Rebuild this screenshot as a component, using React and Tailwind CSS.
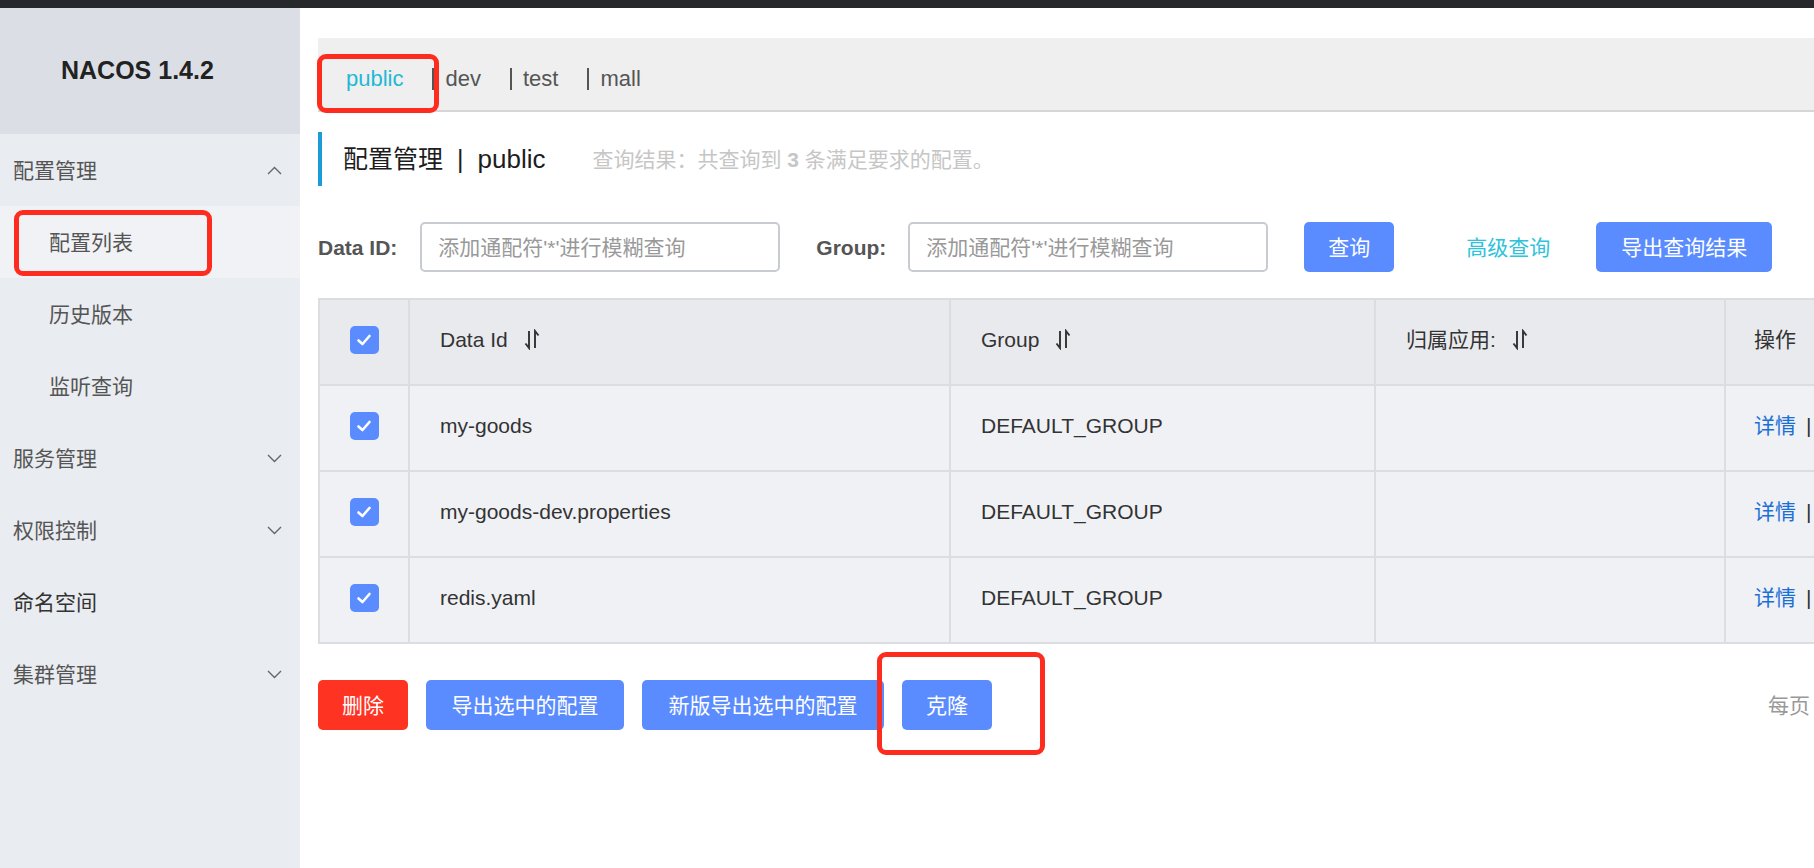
import React from "react";

const FONT = { fontFamily: '"Liberation Sans", "Noto Sans CJK SC", sans-serif' };

function ChevronUp() {
  return (
    <svg width="15" height="9" viewBox="0 0 15 9" fill="none">
      <polyline points="1,8 7.5,1.5 14,8" stroke="#666" strokeWidth="1.4" />
    </svg>
  );
}
function ChevronDown() {
  return (
    <svg width="15" height="9" viewBox="0 0 15 9" fill="none">
      <polyline points="1,1 7.5,7.5 14,1" stroke="#666" strokeWidth="1.4" />
    </svg>
  );
}
function SortIcon() {
  return (
    <svg width="16" height="21" viewBox="0 0 16 21" fill="none" className="ml-[16px]">
      <path d="M5 2 V19 L1.5 14.5" stroke="#333" strokeWidth="1.9" />
      <path d="M11 19 V2 L14.5 6.5" stroke="#333" strokeWidth="1.9" />
    </svg>
  );
}
function Check() {
  return (
    <div className="w-[29px] h-[28px] rounded-[5px] bg-[#5b8cff] flex items-center justify-center">
      <svg width="16" height="14" viewBox="0 0 16 14" fill="none">
        <polyline points="2.5,7.5 6.5,11 13.5,3" stroke="#fff" strokeWidth="2.6" strokeLinecap="round" strokeLinejoin="round" />
      </svg>
    </div>
  );
}

const menu = [
  { label: "配置管理", kind: "group", open: true },
  { label: "配置列表", kind: "sub", active: true },
  { label: "历史版本", kind: "sub" },
  { label: "监听查询", kind: "sub" },
  { label: "服务管理", kind: "group" },
  { label: "权限控制", kind: "group" },
  { label: "命名空间", kind: "plain" },
  { label: "集群管理", kind: "group" },
];

const rows = ["my-goods", "my-goods-dev.properties", "redis.yaml"];
const GRID = "grid grid-cols-[90px_541px_425px_350px_200px]";
const CELL = "border-r-2 border-b-2 border-[#dcdde1] flex items-center pb-[5px]";

export default function App() {
  return (
    <div className="relative w-[1814px] h-[868px] overflow-hidden bg-white flex flex-col" style={FONT}>
      <div className="h-[8px] bg-[#26282c] shrink-0" />
      <div className="flex flex-1 min-h-0">
        {/* Sidebar */}
        <aside className="w-[300px] shrink-0 bg-[#e9ecf0] flex flex-col">
          <div className="h-[126px] bg-[#dbdfe5] flex items-center pl-[61px] pb-[2px]">
            <span className="text-[25px] font-bold text-[#222] leading-none">NACOS 1.4.2</span>
          </div>
          {menu.map((m) => (
            <div
              key={m.label}
              className={
                "h-[72px] flex items-center justify-between pr-[18px] text-[21px] leading-none " +
                (m.kind === "sub" ? "pl-[49px] " : "pl-[13px] ") +
                (m.active ? "bg-[#f1f2f6] " : "") +
                (m.kind === "plain" ? "text-[#333]" : "text-[#555]")
              }
            >
              <span>{m.label}</span>
              {m.kind === "group" && (m.open ? <ChevronUp /> : <ChevronDown />)}
            </div>
          ))}
        </aside>

        {/* Main */}
        <main className="flex-1 min-w-0 overflow-hidden pl-[18px] pt-[30px] whitespace-nowrap">
          {/* tabs */}
          <div className="h-[74px] bg-[#efefef] border-b-2 border-[#d6d6d6] flex items-center pt-[9px] text-[22px] leading-none">
            <span className="ml-[28px] text-[#1fb9d6]">public</span>
            {["dev", "test", "mall"].map((t) => (
              <div key={t} className="flex items-center ml-[29px]">
                <div className="w-[2px] h-[22px] bg-[#555]" />
                <span className="ml-[11px] text-[#555]">{t}</span>
              </div>
            ))}
          </div>

          {/* title */}
          <div className="mt-[20px] h-[54px] border-l-4 border-[#1b9bd7] flex items-center pl-[21px]">
            <span className="text-[25px] text-[#1d1d1d] leading-none">配置管理</span>
            <span className="text-[25px] text-[#1d1d1d] leading-none mx-[14px]">|</span>
            <span className="text-[26px] text-[#1d1d1d] leading-none">public</span>
            <span className="ml-[47px] text-[21px] text-[#c6c6c6] leading-none">
              查询结果：共查询到 <b className="font-bold">3</b> 条满足要求的配置。
            </span>
          </div>

          {/* search */}
          <div className="mt-[36px] h-[50px] flex items-center text-[21px] leading-none">
            <span className="shrink-0 font-bold text-[#555]">Data ID:</span>
            <div className="shrink-0 ml-[23px] w-[360px] h-[50px] border-2 border-[#c9cbd2] rounded-[5px] flex items-center pl-[16px] text-[#999]">
              添加通配符'*'进行模糊查询
            </div>
            <span className="shrink-0 ml-[36px] font-bold text-[#555]">Group:</span>
            <div className="shrink-0 ml-[22px] w-[360px] h-[50px] border-2 border-[#c9cbd2] rounded-[5px] flex items-center pl-[16px] text-[#999]">
              添加通配符'*'进行模糊查询
            </div>
            <button className="shrink-0 ml-[36px] w-[90px] h-[50px] rounded-[5px] bg-[#5b8cff] text-white">查询</button>
            <span className="shrink-0 ml-[72px] text-[#2ec3da]">高级查询</span>
            <button className="shrink-0 ml-[46px] w-[176px] h-[50px] rounded-[5px] bg-[#5b8cff] text-white">导出查询结果</button>
          </div>

          {/* table */}
          <div className="mt-[26px] w-[1606px] border-l-2 border-t-2 border-[#dcdde1] text-[21px] leading-none text-[#333]">
            <div className={GRID + " h-[86px] bg-[#e9eaee]"}>
              <div className={CELL + " justify-center"}><Check /></div>
              <div className={CELL + " pl-[30px]"}>Data Id<SortIcon /></div>
              <div className={CELL + " pl-[30px]"}>Group<SortIcon /></div>
              <div className={CELL + " pl-[30px]"}>归属应用:<SortIcon /></div>
              <div className={CELL + " pl-[28px]"}>操作</div>
            </div>
            {rows.map((r) => (
              <div key={r} className={GRID + " h-[86px] bg-[#f0f1f5]"}>
                <div className={CELL + " justify-center"}><Check /></div>
                <div className={CELL + " pl-[30px]"}>{r}</div>
                <div className={CELL + " pl-[30px]"}>DEFAULT_GROUP</div>
                <div className={CELL} />
                <div className={CELL + " pl-[28px]"}>
                  <span className="text-[#1a6fd6]">详情</span>
                  <span className="ml-[10px] text-[#333]">|</span>
                </div>
              </div>
            ))}
          </div>

          {/* actions */}
          <div className="mt-[36px] h-[50px] flex items-center text-[21px] leading-none">
            <button className="shrink-0 w-[90px] h-[50px] rounded-[5px] bg-[#ff3322] text-white">删除</button>
            <button className="shrink-0 ml-[18px] w-[198px] h-[50px] rounded-[5px] bg-[#5b8cff] text-white">导出选中的配置</button>
            <button className="shrink-0 ml-[18px] w-[242px] h-[50px] rounded-[5px] bg-[#5b8cff] text-white">新版导出选中的配置</button>
            <button className="shrink-0 ml-[18px] w-[90px] h-[50px] rounded-[5px] bg-[#5b8cff] text-white">克隆</button>
            <span className="shrink-0 ml-[776px] text-[#999]">每页</span>
          </div>
        </main>
      </div>

      {/* annotation boxes */}
      <div className="absolute left-[317px] top-[54px] w-[122px] h-[59px] border-[5px] border-[#fe2b1f] rounded-[9px] pointer-events-none" />
      <div className="absolute left-[14px] top-[210px] w-[198px] h-[66px] border-[5px] border-[#fe2b1f] rounded-[9px] pointer-events-none" />
      <div className="absolute left-[877px] top-[652px] w-[168px] h-[103px] border-[5px] border-[#fe2b1f] rounded-[9px] pointer-events-none" />
    </div>
  );
}
